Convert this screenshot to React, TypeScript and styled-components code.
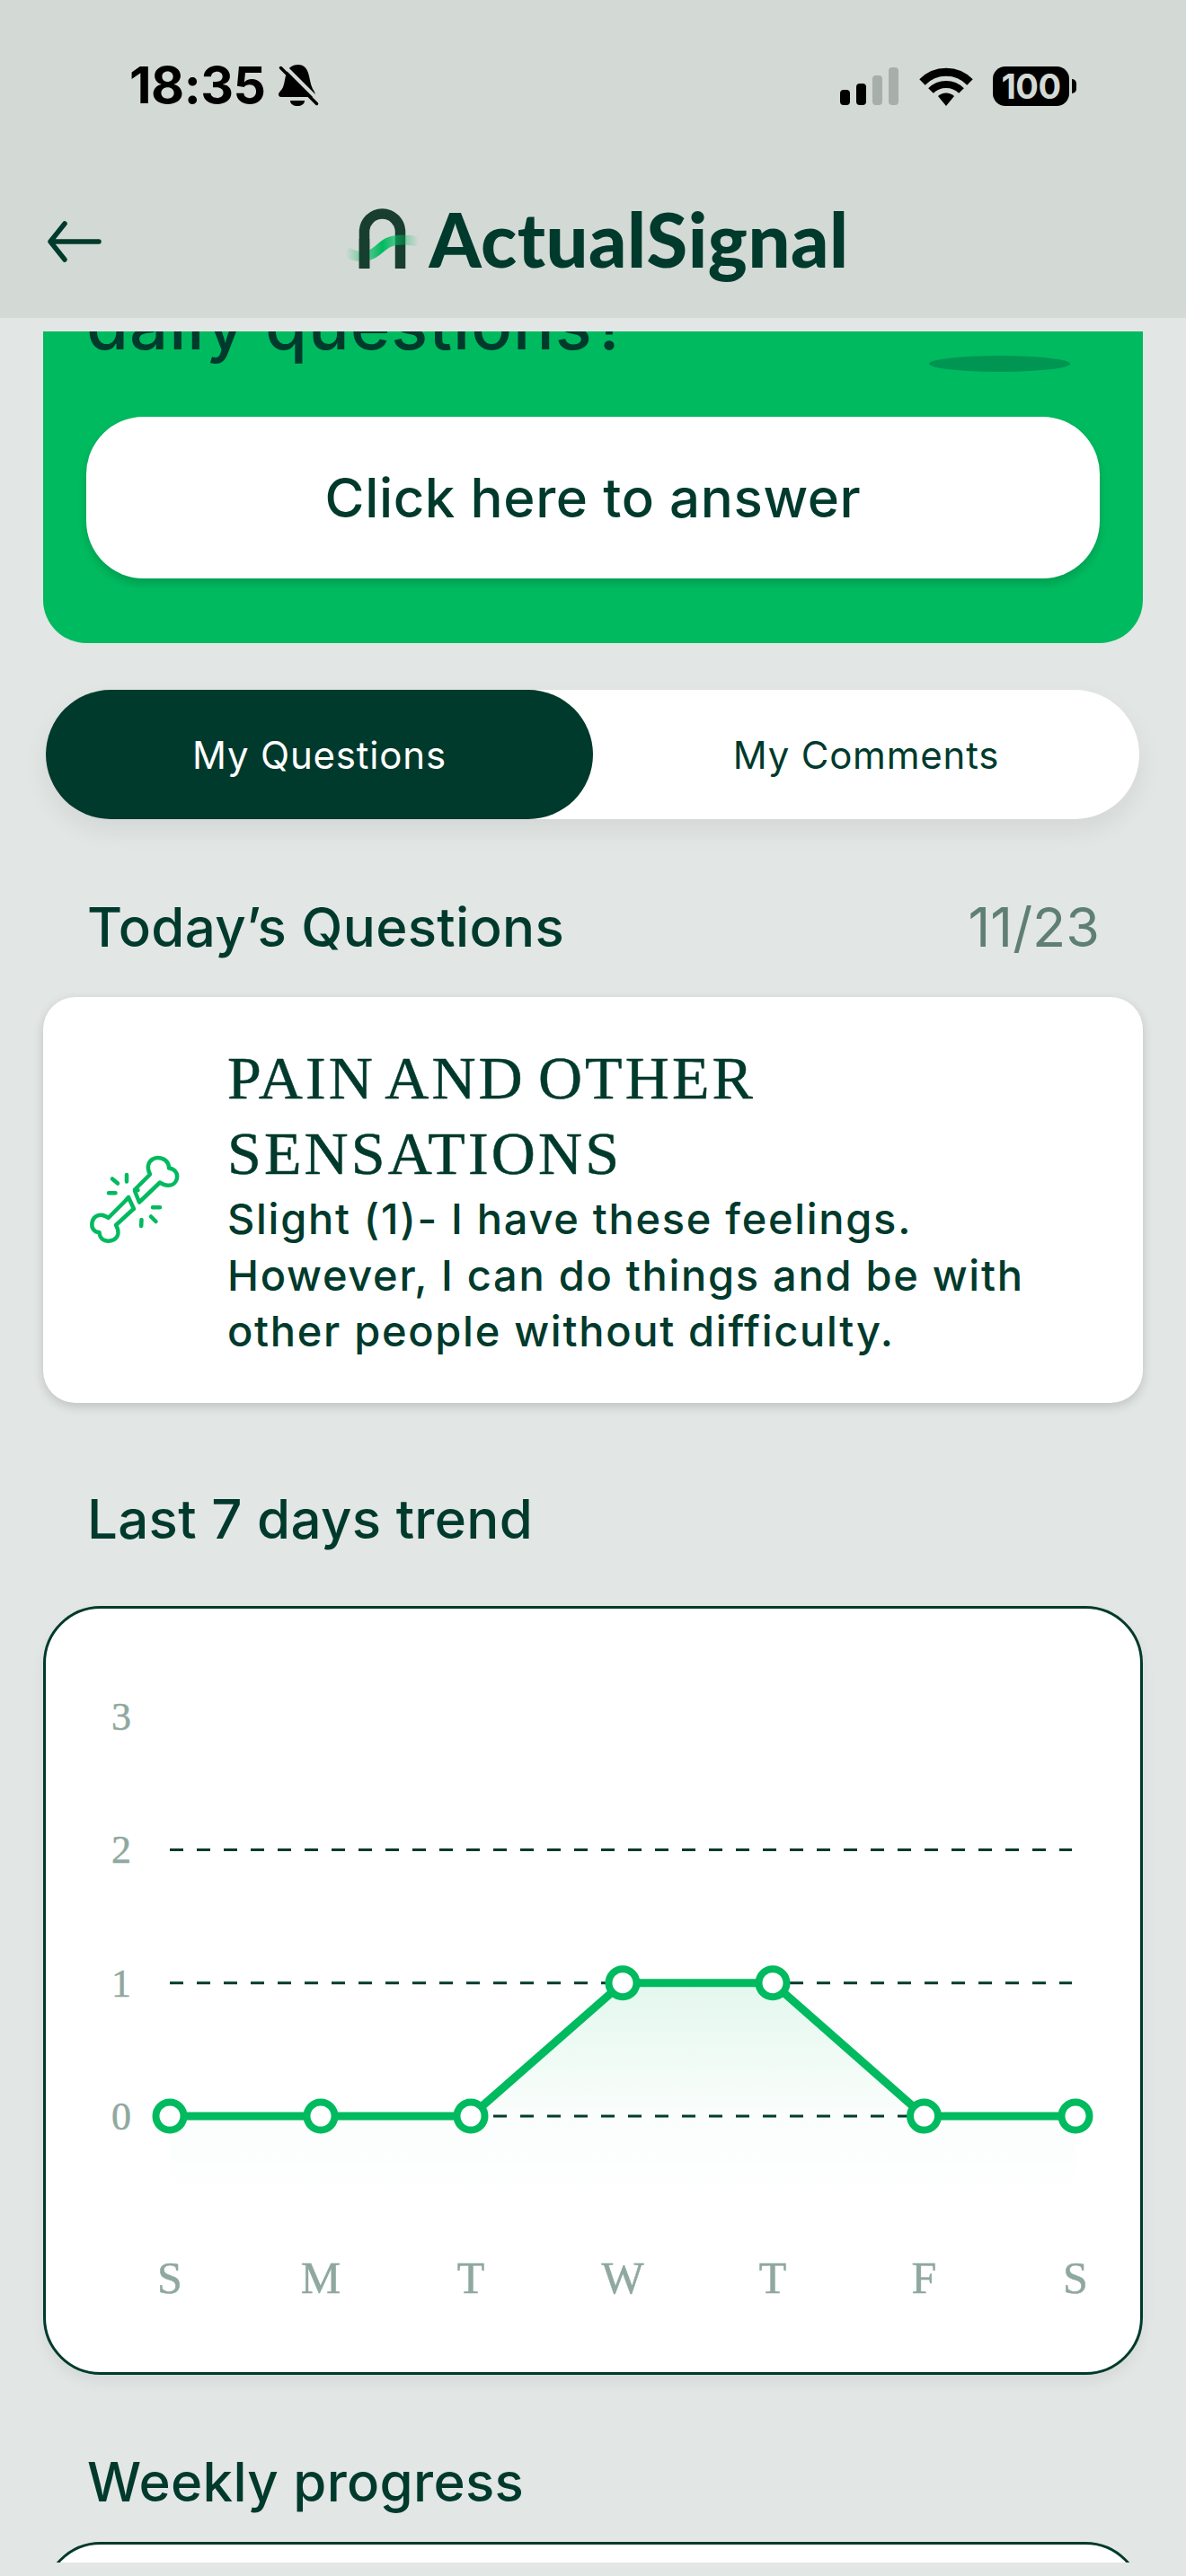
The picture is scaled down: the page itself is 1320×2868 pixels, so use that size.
import React from "react";
import styled, { createGlobalStyle } from "styled-components";

const DARK = "#003a2c";
const GREEN = "#00ba5f";
const HEADER_BG = "#d3d9d5";

const GlobalStyle = createGlobalStyle`
  html, body {
    margin: 0;
    padding: 0;
    background: #e2e6e5;
    font-family: Inter, "Liberation Sans", sans-serif;
    color: ${DARK};
  }
`;

const Page = styled.div`
  width: 1320px;
  height: 2868px;
  overflow: hidden;
  background: #e2e6e5;
`;

const Header = styled.header`
  height: 354px;
  background: ${HEADER_BG};
  display: flex;
  flex-direction: column;
`;

const StatusBar = styled.div`
  height: 204px;
  box-sizing: border-box;
  padding: 68px 130px 0 144px;
  display: flex;
  justify-content: space-between;
  align-items: flex-start;
`;

const StatusGroup = styled.div<{ $top?: number }>`
  display: flex;
  align-items: center;
  margin-top: ${(p) => p.$top || 0}px;
`;

const Clock = styled.span`
  font-size: 57px;
  line-height: 54px;
  font-weight: 700;
  color: #000;
  letter-spacing: -0.5px;
  margin-right: 12px;
`;

const Battery = styled.div`
  position: relative;
  width: 85px;
  height: 44px;
  margin-left: 22px;
  border-radius: 14px;
  background: #000;
  color: ${HEADER_BG};
  font-size: 38px;
  line-height: 44px;
  font-weight: 700;
  letter-spacing: -0.5px;
  text-align: center;

  &::after {
    content: "";
    position: absolute;
    left: 88px;
    top: 14px;
    width: 5px;
    height: 16px;
    border-radius: 0 8px 8px 0;
    background: #000;
  }
`;

const NavBar = styled.nav`
  display: grid;
  grid-template-columns: 1fr auto 1fr;
  align-items: center;
  height: 124px;
`;

const BackButton = styled.button`
  border: 0;
  padding: 0 0 0 48px;
  background: none;
  display: flex;
  align-items: center;
  justify-self: start;
  margin-top: 6px;
`;

const Logo = styled.div`
  display: flex;
  align-items: center;
  margin-left: 3px;
`;

const LogoText = styled.span`
  font-family: Lato, sans-serif;
  font-size: 83px;
  line-height: 100px;
  font-weight: 900;
  color: ${DARK};
  letter-spacing: 0.5px;
  margin-left: 11px;
`;

const Scroller = styled.main`
  margin-top: 15px;
  height: 2484px;
  overflow: hidden;
  padding: 0 48px;
`;

const Hero = styled.section`
  position: relative;
  margin-top: -80px;
  height: 427px;
  box-sizing: border-box;
  padding: 24px 48px 0;
  background: ${GREEN};
  border-radius: 48px;
`;

const HeroTitle = styled.h2`
  margin: 0 0 55px;
  font-size: 76px;
  line-height: 96px;
  font-weight: 500;
  letter-spacing: 1px;
  color: ${DARK};
`;

const HeroShadow = styled.div`
  position: absolute;
  left: 986px;
  top: 107px;
  width: 157px;
  height: 18px;
  border-radius: 50%;
  background: #009552;
`;

const AnswerButton = styled.button`
  display: block;
  width: 100%;
  height: 180px;
  border: 0;
  border-radius: 64px;
  background: #fff;
  box-shadow: 0 6px 10px rgba(0, 0, 0, 0.14);
  font-family: inherit;
  font-size: 60px;
  font-weight: 500;
  letter-spacing: 0.6px;
  color: ${DARK};
`;

const Tabs = styled.div`
  display: grid;
  grid-template-columns: 609px 1fr;
  height: 144px;
  margin: 52px 4px 0 3px;
  border-radius: 72px;
  background: #fff;
  box-shadow: 0 12px 28px rgba(0, 0, 0, 0.07);
`;

const Tab = styled.div<{ $active?: boolean }>`
  display: flex;
  align-items: center;
  justify-content: center;
  border-radius: 72px;
  font-size: 42px;
  font-weight: 400;
  letter-spacing: 0.8px;
  background: ${(p) => (p.$active ? DARK : "transparent")};
  color: ${(p) => (p.$active ? "#fff" : DARK)};
`;

const SectionRow = styled.div<{ $top: number; $bottom: number }>`
  display: flex;
  justify-content: space-between;
  align-items: center;
  height: 68px;
  margin: ${(p) => p.$top}px 48px ${(p) => p.$bottom}px 49px;
`;

const SectionTitle = styled.h3`
  margin: 0;
  font-size: 60px;
  font-weight: 500;
  letter-spacing: 0.3px;
  color: ${DARK};
`;

const Counter = styled.span`
  font-size: 61px;
  font-weight: 400;
  color: #5f7f74;
`;

const QuestionCard = styled.article`
  display: flex;
  align-items: center;
  gap: 43px;
  height: 452px;
  box-sizing: border-box;
  padding: 0 60px 0 42px;
  background: #fff;
  border-radius: 36px;
  box-shadow: 0 4px 12px rgba(0, 0, 0, 0.16);
`;

const QuestionBody = styled.div`
  flex: 1;
`;

const QuestionTitle = styled.h4`
  margin: 0;
  font-family: "Liberation Serif", serif;
  font-size: 68px;
  line-height: 84px;
  font-weight: 400;
  letter-spacing: 3.1px;
  word-spacing: -6px;
  -webkit-text-stroke: 0.5px ${DARK};
  color: ${DARK};
`;

const QuestionText = styled.p`
  margin: 0;
  font-size: 47px;
  line-height: 62.5px;
  font-weight: 450;
  letter-spacing: 1.7px;
  color: ${DARK};
`;

const ChartCard = styled.section`
  height: 856px;
  box-sizing: border-box;
  border: 3px solid ${DARK};
  border-radius: 64px;
  background: #fff;
  box-shadow: 0 8px 16px rgba(0, 0, 0, 0.06);
`;

const ChartSvg = styled.svg`
  display: block;
`;

const AxisLabel = styled.text<{ $size: number }>`
  font-family: "Liberation Serif", serif;
  font-size: ${(p) => p.$size}px;
  fill: #8fa8a0;
  stroke: #8fa8a0;
  stroke-width: 0.5px;
  text-anchor: middle;
`;

const NextCard = styled.section`
  height: 400px;
  box-sizing: border-box;
  border: 3px solid ${DARK};
  border-radius: 64px;
  background: #fff;
`;

// chart geometry is in page pixels, shifted by the card's padding box
const OX = 51;
const OY = 1791;
const xs = [189, 357, 524, 693, 860, 1028.5, 1197].map((x) => x - OX);
const rowY = (v: number) => 2356 - OY - v * 148.3;
const values = [0, 0, 0, 1, 1, 0, 0];
const days = ["S", "M", "T", "W", "T", "F", "S"];
const linePoints = xs.map((x, i) => `${x},${rowY(values[i])}`).join(" ");

function Chart() {
  return (
    <ChartSvg width={1218} height={850} viewBox="0 0 1218 850">
      <defs>
        <linearGradient
          id="areaFill"
          gradientUnits="userSpaceOnUse"
          x1="0"
          y1={rowY(1)}
          x2="0"
          y2={rowY(-0.7)}
        >
          <stop offset="0" stopColor={GREEN} stopOpacity="0.11" />
          <stop offset="0.59" stopColor={GREEN} stopOpacity="0.02" />
          <stop offset="1" stopColor={GREEN} stopOpacity="0" />
        </linearGradient>
      </defs>
      {[3, 2, 1, 0].map((v) => (
        <AxisLabel key={v} $size={44} x={135 - OX} y={rowY(v) + 15}>
          {v}
        </AxisLabel>
      ))}
      {[2, 1, 0].map((v) => (
        <line
          key={v}
          x1={xs[0]}
          x2={xs[6] - 4}
          y1={rowY(v)}
          y2={rowY(v)}
          stroke={DARK}
          strokeWidth={3}
          strokeDasharray="15 15"
        />
      ))}
      <polygon
        points={`${linePoints} ${xs[6]},${rowY(-0.7)} ${xs[0]},${rowY(-0.7)}`}
        fill="url(#areaFill)"
      />
      <polyline points={linePoints} fill="none" stroke={GREEN} strokeWidth={9} />
      {xs.map((x, i) => (
        <circle
          key={i}
          cx={x}
          cy={rowY(values[i])}
          r={15.5}
          fill="#fff"
          stroke={GREEN}
          strokeWidth={8}
        />
      ))}
      {days.map((d, i) => (
        <AxisLabel key={i} $size={50} x={xs[i]} y={2553 - OY}>
          {d}
        </AxisLabel>
      ))}
    </ChartSvg>
  );
}

function BellSlash() {
  return (
    <svg width="60" height="60" viewBox="0 0 60 60" style={{ marginLeft: -8, marginTop: -7 }}>
      <path
        d="M33 10c5 0 9 3 11 9 2 6 2 12 5 18 2 3 3 5 3 7 0 1-1 2-3 2H14c-2 0-3-1-3-3 0-2 3-4 5-8 2-5 2-11 4-16 2-6 7-9 13-9z"
        fill="#000"
      />
      <path d="M24 50h16c0 4-4 6-8 6s-8-2-8-6z" fill="#000" />
      <path d="M16 10l40 40" stroke={HEADER_BG} strokeWidth="4" />
      <path d="M13.500 13.500l40 40" stroke="#000" strokeWidth="3.500" strokeLinecap="round" />
    </svg>
  );
}

function SignalBars() {
  return (
    <svg width="66" height="42" viewBox="0 0 66 42">
      <rect x="0" y="25" width="11" height="17" rx="4" fill="#000" />
      <rect x="18" y="18" width="11" height="24" rx="4" fill="#000" />
      <rect x="36" y="9" width="11" height="33" rx="4" fill="#a8aeaa" />
      <rect x="54" y="0" width="11" height="42" rx="4" fill="#a8aeaa" />
    </svg>
  );
}

function Wifi() {
  return (
    <svg width="60" height="44" viewBox="0 0 60 44" style={{ marginLeft: 22 }}>
      <path d="M3.500 17.500a37 37 0 0 1 53 0" fill="none" stroke="#000" strokeWidth="9" />
      <path d="M13 27a24 24 0 0 1 34 0" fill="none" stroke="#000" strokeWidth="8" />
      <path d="M21 33a13 13 0 0 1 18 0l-9 11z" fill="#000" />
    </svg>
  );
}

function BackArrow() {
  return (
    <svg width="66" height="48" viewBox="0 0 66 48">
      <path
        d="M62 24H9M24 4L8 24l16 20"
        fill="none"
        stroke={DARK}
        strokeWidth="5.500"
        strokeLinecap="round"
        strokeLinejoin="round"
      />
    </svg>
  );
}

function LogoMark() {
  return (
    <svg width="88" height="80" viewBox="0 0 88 80">
      <defs>
        <linearGradient id="waveFill" x1="0" y1="0" x2="1" y2="0">
          <stop offset="0" stopColor={GREEN} stopOpacity="0" />
          <stop offset="0.5" stopColor={GREEN} stopOpacity="1" />
          <stop offset="1" stopColor={GREEN} stopOpacity="0" />
        </linearGradient>
      </defs>
      <path
        d="M27.500 73V32a20 20 0 0 1 40 0v41"
        fill="none"
        stroke="#183e30"
        strokeWidth="11.500"
      />
      <path
        d="M7 54c11 7 24 8 35-1 9-8 14-12 28-12 7 0 13 1 18 2"
        fill="none"
        stroke="url(#waveFill)"
        strokeWidth="11"
      />
      <path d="M27.500 73V40" stroke="#183e30" strokeWidth="11.500" />
    </svg>
  );
}

function BrokenBone() {
  return (
    <svg width="120" height="120" viewBox="0 0 120 120">
      <g fill="none" stroke={GREEN} strokeWidth="4.500" strokeLinecap="round" strokeLinejoin="round">
        <path d="M65 62.500l-5-12.500 3.500-1-3.500-.5L77 31.500c-4-8-2-14 3-17 6-3 14-1 17 5 1 2 1 4 1 5 6 1 10 5 9 11-1 6-6 9-12 8-3 0-5-2-7-3z" />
        <path d="M53 57l6 13-1 .5L39 88c4 7 3 13-2 16-6 3-14 2-16-5l-.5-3c-6 0-9-5-8-11 1-6 6-9 12-8 3 1 5 2 6 3l19-19z" />
        <path d="M35 36.500l6 5M51 32v7.500M31 52.300h7.500M80 68.300h8M78 78.500l5.500 5.500M67.500 82l-.3 7" />
      </g>
    </svg>
  );
}

export default function App() {
  return (
    <Page>
      <GlobalStyle />
      <Header>
        <StatusBar>
          <StatusGroup>
            <Clock>18:35</Clock>
            <BellSlash />
          </StatusGroup>
          <StatusGroup $top={6}>
            <SignalBars />
            <Wifi />
            <Battery>100</Battery>
          </StatusGroup>
        </StatusBar>
        <NavBar>
          <BackButton>
            <BackArrow />
          </BackButton>
          <Logo>
            <LogoMark />
            <LogoText>ActualSignal</LogoText>
          </Logo>
        </NavBar>
      </Header>

      <Scroller>
        <Hero>
          <HeroTitle>daily questions?</HeroTitle>
          <HeroShadow />
          <AnswerButton>Click here to answer</AnswerButton>
        </Hero>

        <Tabs>
          <Tab $active>My Questions</Tab>
          <Tab>My Comments</Tab>
        </Tabs>

        <SectionRow $top={86} $bottom={44}>
          <SectionTitle>Today’s Questions</SectionTitle>
          <Counter>11/23</Counter>
        </SectionRow>

        <QuestionCard>
          <BrokenBone />
          <QuestionBody>
            <QuestionTitle>PAIN AND OTHER SENSATIONS</QuestionTitle>
            <QuestionText>
              Slight (1)- I have these feelings. However, I can do things and be with other people
              without difficulty.
            </QuestionText>
          </QuestionBody>
        </QuestionCard>

        <SectionRow $top={95} $bottom={63}>
          <SectionTitle>Last 7 days trend</SectionTitle>
        </SectionRow>

        <ChartCard>
          <Chart />
        </ChartCard>

        <SectionRow $top={85} $bottom={33}>
          <SectionTitle>Weekly progress</SectionTitle>
        </SectionRow>

        <NextCard />
      </Scroller>
    </Page>
  );
}
